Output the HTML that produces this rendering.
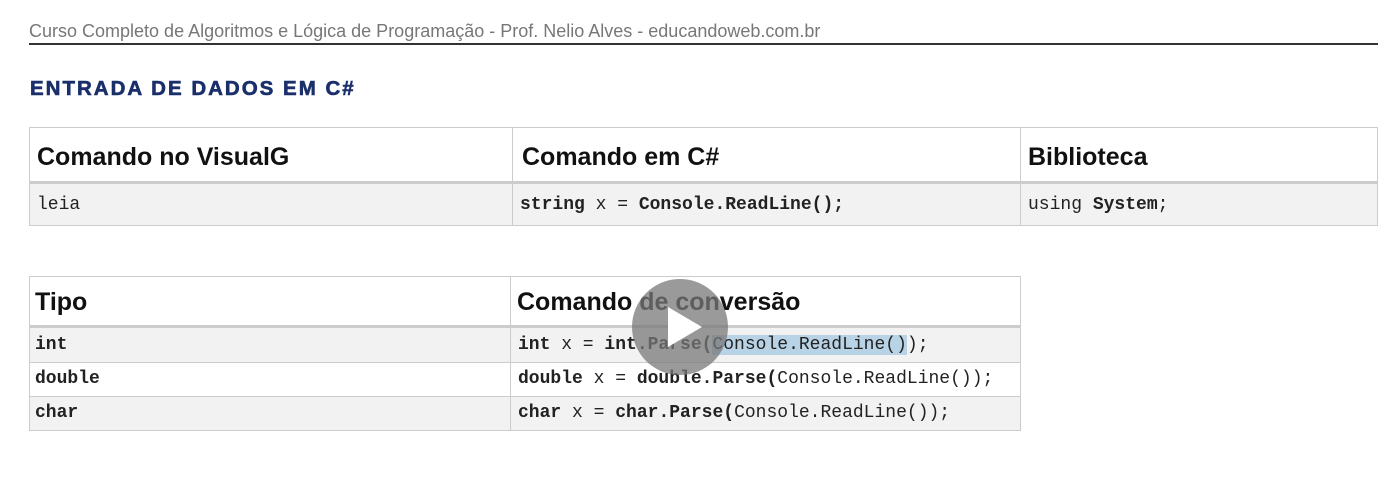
<!DOCTYPE html>
<html><head><style>
body{margin:0;width:1400px;height:492px;background:#fff;position:relative;overflow:hidden;font-family:"Liberation Sans",sans-serif}
.a{position:absolute}
.m{font-family:"Liberation Mono",monospace;font-size:18px;color:#222}
.h{font-weight:bold;font-size:25px;color:#111}
.b{border:1px solid #ccc;box-sizing:border-box}
</style></head><body>
<div class="a" style="left:29px;top:21px;font-size:18px;color:#777">Curso Completo de Algoritmos e Lógica de Programação - Prof. Nelio Alves - educandoweb.com.br</div>
<div class="a" style="left:29px;top:43px;width:1349px;height:2px;background:#333"></div>
<div class="a" style="left:30px;top:77px;font-size:20.5px;font-weight:900;color:#1a2f6b;letter-spacing:2px;-webkit-text-stroke:0.6px #1a2f6b">ENTRADA DE DADOS EM C#</div>

<div class="a b" style="left:29px;top:127px;width:1349px;height:57px;border-bottom:3px solid #ccc"></div>
<div class="a b" style="left:29px;top:183px;width:1349px;height:43px;background:#f2f2f2"></div>
<div class="a" style="left:512px;top:127px;width:1px;height:99px;background:#ccc"></div>
<div class="a" style="left:1020px;top:127px;width:1px;height:99px;background:#ccc"></div>
<div class="a h" style="left:37px;top:143px">Comando no VisualG</div>
<div class="a h" style="left:522px;top:143px">Comando em C#</div>
<div class="a h" style="left:1028px;top:143px">Biblioteca</div>
<div class="a m" style="left:37px;top:195px">leia</div>
<div class="a m" style="left:520px;top:195px"><b>string</b> x = <b>Console.ReadLine();</b></div>
<div class="a m" style="left:1028px;top:195px">using <b>System</b>;</div>

<div class="a b" style="left:29px;top:276px;width:992px;height:52px;border-bottom:3px solid #ccc"></div>
<div class="a b" style="left:29px;top:327px;width:992px;height:36px;background:#f2f2f2"></div>
<div class="a b" style="left:29px;top:362px;width:992px;height:35px"></div>
<div class="a b" style="left:29px;top:396px;width:992px;height:35px;background:#f2f2f2"></div>
<div class="a" style="left:510px;top:276px;width:1px;height:155px;background:#ccc"></div>
<div class="a h" style="left:35px;top:288px">Tipo</div>
<div class="a h" style="left:517px;top:288px">Comando de conversão</div>
<div class="a m" style="left:35px;top:335px"><b>int</b></div>
<div class="a m" style="left:35px;top:369px"><b>double</b></div>
<div class="a m" style="left:35px;top:403px"><b>char</b></div>
<div class="a m" style="left:518px;top:335px"><b>int</b> x = <b>int.Parse(</b><span style="background:#b9d3e6">Console.ReadLine()</span>);</div>
<div class="a m" style="left:518px;top:369px"><b>double</b> x = <b>double.Parse(</b>Console.ReadLine());</div>
<div class="a m" style="left:518px;top:403px"><b>char</b> x = <b>char.Parse(</b>Console.ReadLine());</div>

<svg class="a" style="left:630px;top:277px" width="100" height="100"><circle cx="50" cy="50" r="48" fill="rgba(120,120,120,0.75)"/><path d="M38 30 L72 50 L38 70 Z" fill="#fff"/></svg>
</body></html>
